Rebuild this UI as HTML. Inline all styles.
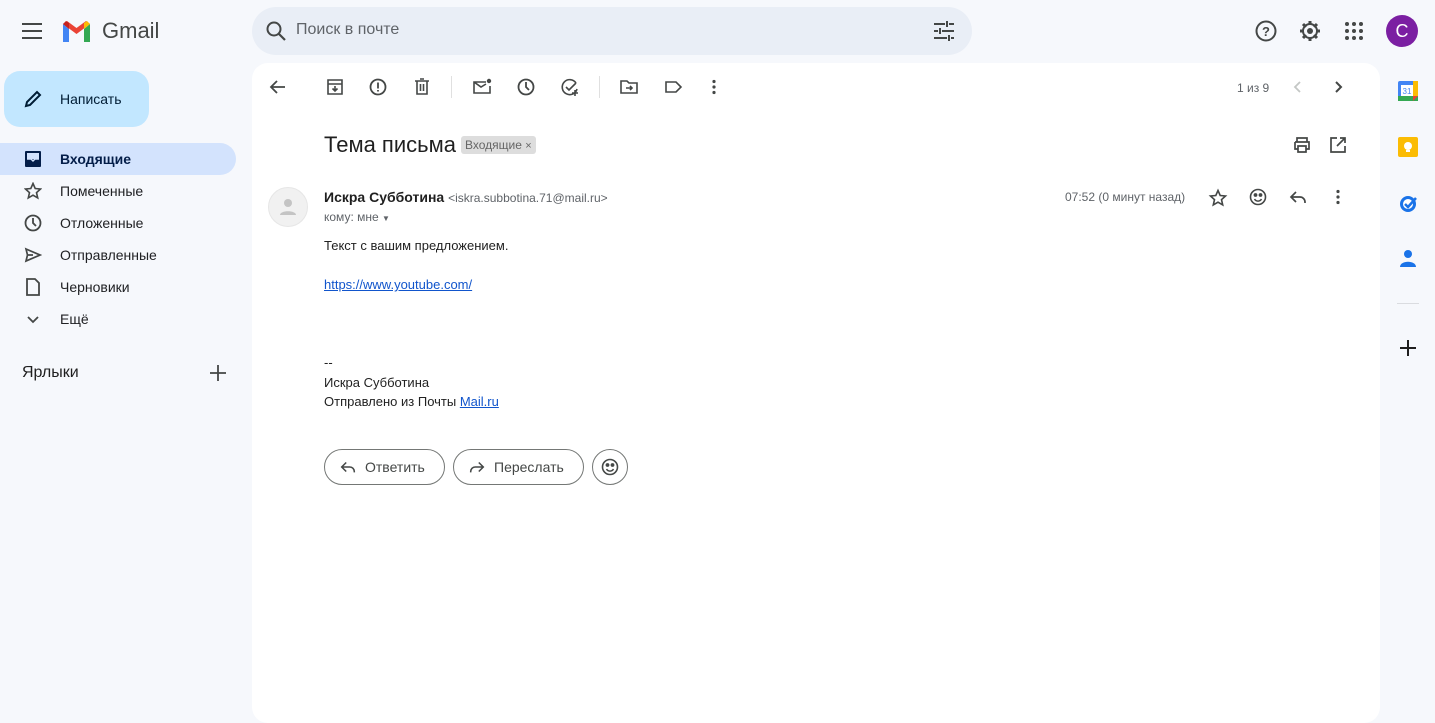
<!DOCTYPE html>
<html><head><meta charset="utf-8">
<style>
*{box-sizing:border-box;margin:0;padding:0}
body{width:1435px;height:706px;background:#f6f8fc;font-family:"Liberation Sans",Arial,sans-serif;color:#1f1f1f;position:relative;overflow:hidden}
.abs{position:absolute}
svg{display:block}
.ic{position:absolute;width:20px;height:20px;fill:none;stroke:#444746;stroke-width:1.8}
.nav{position:absolute;left:0;width:236px;height:32px;border-radius:0 16px 16px 0;font-size:14px;color:#202124}
.nav span{position:absolute;left:60px;top:8px}
.nav svg{position:absolute;left:24px;top:7px}
.btn{position:absolute;top:449px;height:36px;border:1px solid #747775;border-radius:18px;font-size:14px;color:#444746}
</style></head><body>
<svg class="abs" style="left:22px;top:22px" width="20" height="18"><path d="M0 2h20M0 9h20M0 16h20" stroke="#444746" stroke-width="2"/></svg>
<svg class="abs" style="left:61px;top:20px" width="31" height="22" viewBox="0 0 31 22">
<path d="M2 22V4l6 5v13z" fill="#4285f4"/><path d="M23 22V9l6-5v18z" fill="#34a853"/>
<path d="M2 4l13.5 10L29 4v0l-4-3-9.5 7L6 1z" fill="#ea4335"/><path d="M23 9l6-5-3-3-3 2z" fill="#fbbc04"/><path d="M2 4l6 5V3L5 1z" fill="#c5221f"/></svg>
<div class="abs" style="left:102px;top:18px;font-size:22px;color:#444746">Gmail</div>
<div class="abs" style="left:252px;top:7px;width:720px;height:48px;border-radius:24px;background:#e9eef6"></div>
<svg class="abs" style="left:265px;top:20px" width="22" height="22"><circle cx="9" cy="9" r="6.5" fill="none" stroke="#444746" stroke-width="2"/><path d="M14 14l6 6" stroke="#444746" stroke-width="2.2"/></svg>
<div class="abs" style="left:296px;top:21px;font-size:16px;color:#5f6368">Поиск в почте</div>
<svg class="abs" style="left:934px;top:21px" width="20" height="20"><path d="M0 3h11M15 3h5M0 10h4M8 10h12M0 17h13M17 17h3M13 0v6M6 7v6M15 14v6" stroke="#444746" stroke-width="2"/></svg>
<svg class="abs" style="left:1255px;top:20px" width="22" height="22"><circle cx="11" cy="11" r="9.5" fill="none" stroke="#444746" stroke-width="2"/><text x="11" y="16" font-size="13" text-anchor="middle" fill="#444746" font-family="Liberation Sans" font-weight="bold">?</text></svg>
<svg class="abs" style="left:1299px;top:20px" width="22" height="22" viewBox="0 0 22 22"><circle cx="11" cy="11" r="7" fill="none" stroke="#444746" stroke-width="2"/><circle cx="11" cy="11" r="3" fill="#444746"/><path d="M11 1v4M11 17v4M1 11h4M17 11h4M4 4l3 3M15 15l3 3M4 18l3-3M15 7l3-3" stroke="#444746" stroke-width="3"/></svg>
<svg class="abs" style="left:1345px;top:22px" width="18" height="18"><g fill="#444746"><circle cx="2" cy="2" r="2"/><circle cx="9" cy="2" r="2"/><circle cx="16" cy="2" r="2"/><circle cx="2" cy="9" r="2"/><circle cx="9" cy="9" r="2"/><circle cx="16" cy="9" r="2"/><circle cx="2" cy="16" r="2"/><circle cx="9" cy="16" r="2"/><circle cx="16" cy="16" r="2"/></g></svg>
<div class="abs" style="left:1386px;top:15px;width:32px;height:32px;border-radius:50%;background:#7b1fa2;color:#fff;font-size:18px;text-align:center;line-height:32px">C</div>

<div class="abs" style="left:4px;top:71px;width:145px;height:56px;border-radius:16px;background:#c2e7ff"></div>
<svg class="abs" style="left:23px;top:89px" width="20" height="20"><path d="M3 17l1-4L14 3l3 3L7 16z" fill="none" stroke="#001d35" stroke-width="2"/></svg>
<div class="abs" style="left:60px;top:91px;font-size:14px;color:#001d35">Написать</div>
<div class="nav" style="top:143px;background:#d3e3fd;font-weight:bold;color:#041e49"><svg width="18" height="18"><rect x="1" y="1" width="16" height="16" rx="1" fill="#041e49"/><path d="M3 9h4l2 2 2-2h4" stroke="#d3e3fd" stroke-width="1.5" fill="none"/><rect x="3" y="3" width="12" height="6" fill="#d3e3fd"/></svg><span>Входящие</span></div>
<div class="nav" style="top:175px"><svg width="18" height="18"><path d="M9 1.5l2.2 5 5.3.5-4 3.6 1.2 5.3L9 13.2 4.3 15.9l1.2-5.3-4-3.6 5.3-.5z" fill="none" stroke="#444746" stroke-width="1.6"/></svg><span>Помеченные</span></div>
<div class="nav" style="top:207px"><svg width="18" height="18"><circle cx="9" cy="9" r="7.5" fill="none" stroke="#444746" stroke-width="1.8"/><path d="M9 4v5l3 3" fill="none" stroke="#444746" stroke-width="1.8"/></svg><span>Отложенные</span></div>
<div class="nav" style="top:239px"><svg width="18" height="18"><path d="M2 3l14 6-14 6 1.5-6z M3.5 9H9" fill="none" stroke="#444746" stroke-width="1.7"/></svg><span>Отправленные</span></div>
<div class="nav" style="top:271px"><svg width="18" height="18"><path d="M3 1h8l4 4v12H3z" fill="none" stroke="#444746" stroke-width="1.8"/></svg><span>Черновики</span></div>
<div class="nav" style="top:303px"><svg width="18" height="18"><path d="M4 7l5 5 5-5" fill="none" stroke="#444746" stroke-width="1.8"/></svg><span>Ещё</span></div>
<div class="abs" style="left:22px;top:364px;font-size:16px;color:#1f1f1f">Ярлыки</div>
<svg class="abs" style="left:210px;top:365px" width="16" height="16"><path d="M8 0v16M0 8h16" stroke="#444746" stroke-width="1.8"/></svg>

<div class="abs" style="left:252px;top:63px;width:1128px;height:660px;background:#fff;border-radius:16px"></div>
<svg class="ic" style="left:268px;top:77px" viewBox="0 0 20 20"><path d="M17 10H4M9 4l-6 6 6 6"/></svg>
<svg class="ic" style="left:325px;top:77px" viewBox="0 0 20 20"><path d="M3 3h14v14H3zM3 7h14M10 9v5M7.5 11.5L10 14l2.5-2.5" stroke-width="1.6"/></svg>
<svg class="ic" style="left:368px;top:77px" viewBox="0 0 20 20"><circle cx="10" cy="10" r="7.5"/><path d="M10 5.5v6M10 13v1.5"/></svg>
<svg class="ic" style="left:412px;top:77px" viewBox="0 0 20 20"><path d="M3 4h14M8 2h4M5 4v13h10V4M8.5 7v7M11.5 7v7" stroke-width="1.6"/></svg>
<div class="abs" style="left:451px;top:76px;width:1px;height:22px;background:#e0e0e0"></div>
<svg class="ic" style="left:472px;top:77px" viewBox="0 0 20 20"><path d="M14 5H2v11h16V9M2 5l7 5 5-3" stroke-width="1.6"/><circle cx="17" cy="4" r="2.2" fill="#444746" stroke="none"/></svg>
<svg class="ic" style="left:516px;top:77px" viewBox="0 0 20 20"><circle cx="10" cy="10" r="7.5"/><path d="M10 5v5l3 3"/></svg>
<svg class="ic" style="left:560px;top:77px" viewBox="0 0 20 20"><path d="M16 6a7.5 7.5 0 1 0 1 6M6 10l3 3 7-7M15 13v6M12 16h6" stroke-width="1.6"/></svg>
<div class="abs" style="left:599px;top:76px;width:1px;height:22px;background:#e0e0e0"></div>
<svg class="ic" style="left:619px;top:77px" viewBox="0 0 20 20"><path d="M2 4h6l2 2h8v10H2zM7 11h6M11 9l2 2-2 2" stroke-width="1.6"/></svg>
<svg class="ic" style="left:663px;top:77px" viewBox="0 0 20 20"><path d="M3 5h10l5 5-5 5H3z" stroke-width="1.6"/></svg>
<svg class="ic" style="left:704px;top:77px" viewBox="0 0 20 20"><g fill="#444746" stroke="none"><circle cx="10" cy="4.5" r="1.6"/><circle cx="10" cy="10" r="1.6"/><circle cx="10" cy="15.5" r="1.6"/></g></svg>
<div class="abs" style="left:1237px;top:81px;font-size:12px;color:#5f6368">1 из 9</div>
<svg class="ic" style="left:1288px;top:77px;stroke:#c4c7c5" viewBox="0 0 20 20"><path d="M12 5l-5 5 5 5"/></svg>
<svg class="ic" style="left:1328px;top:77px" viewBox="0 0 20 20"><path d="M8 5l5 5-5 5" stroke-width="2"/></svg>

<div class="abs" style="left:324px;top:132px;font-size:22px;color:#1f1f1f">Тема письма</div>
<div class="abs" style="left:461px;top:136px;height:18px;padding:0 4px;background:#ddd;border-radius:3px;font-size:12px;line-height:18px;color:#666">Входящие <span style="font-size:11px">×</span></div>
<svg class="ic" style="left:1292px;top:135px" viewBox="0 0 20 20"><path d="M5 7V3h10v4M3 7h14v7h-3M6 14H3V7M6 11h8v6H6z" stroke-width="1.7"/></svg>
<svg class="ic" style="left:1328px;top:135px" viewBox="0 0 20 20"><path d="M9 3H3v14h14v-6M12 3h5v5M17 3l-8 8" stroke-width="1.7"/></svg>

<div class="abs" style="left:268px;top:187px;width:40px;height:40px;border-radius:50%;background:#f1f1f1;border:1px solid #e6e6e6"></div>
<svg class="abs" style="left:279px;top:197px" width="18" height="20"><circle cx="9" cy="6" r="4" fill="#c4c4c4"/><path d="M1 18c0-5 16-5 16 0z" fill="#c4c4c4"/></svg>
<div class="abs" style="left:324px;top:189px;font-size:14px"><b>Искра Субботина</b> <span style="font-size:12px;color:#5f6368">&lt;iskra.subbotina.71@mail.ru&gt;</span></div>
<div class="abs" style="left:324px;top:210px;font-size:12px;color:#5f6368">кому: мне <span style="font-size:8px">▼</span></div>
<div class="abs" style="left:1065px;top:190px;font-size:12px;color:#5f6368">07:52 (0 минут назад)</div>
<svg class="ic" style="left:1208px;top:188px" viewBox="0 0 20 20"><path d="M10 2.5l2.2 5 5.3.5-4 3.6 1.2 5.3L10 14.2 5.3 16.9l1.2-5.3-4-3.6 5.3-.5z" stroke-width="1.6"/></svg>
<svg class="ic" style="left:1248px;top:187px" viewBox="0 0 20 20"><circle cx="10" cy="10" r="7.5" stroke-width="1.6"/><circle cx="7.5" cy="8" r="1" fill="#444746"/><circle cx="12.5" cy="8" r="1" fill="#444746"/><path d="M6.5 12a4 4 0 0 0 7 0" stroke-width="1.5"/></svg>
<svg class="ic" style="left:1288px;top:187px" viewBox="0 0 20 20"><path d="M8 5l-5 5 5 5M3 10h9a5 5 0 0 1 5 5v1" stroke-width="1.7"/></svg>
<svg class="ic" style="left:1328px;top:187px" viewBox="0 0 20 20"><g fill="#444746" stroke="none"><circle cx="10" cy="4.5" r="1.6"/><circle cx="10" cy="10" r="1.6"/><circle cx="10" cy="15.5" r="1.6"/></g></svg>

<div class="abs" style="left:324px;top:236px;font-size:13px;line-height:19.5px;color:#222">
Текст с вашим предложением.<br><br>
<span style="color:#1155cc;text-decoration:underline">https://www.youtube.com/</span><br><br><br><br>
--<br>Искра Субботина<br>Отправлено из Почты <span style="color:#1155cc;text-decoration:underline">Mail.ru</span>
</div>

<div class="btn" style="left:324px;width:121px"><svg class="ic" style="left:14px;top:8px;width:18px;height:18px" viewBox="0 0 20 20"><path d="M8 5l-5 5 5 5M3 10h9a5 5 0 0 1 5 5v1" stroke-width="1.7"/></svg><span class="abs" style="left:40px;top:9px">Ответить</span></div>
<div class="btn" style="left:453px;width:131px"><svg class="ic" style="left:14px;top:8px;width:18px;height:18px" viewBox="0 0 20 20"><path d="M12 5l5 5-5 5M17 10H8a5 5 0 0 0-5 5v1" stroke-width="1.7"/></svg><span class="abs" style="left:40px;top:9px">Переслать</span></div>
<div class="btn" style="left:592px;width:36px"><svg class="ic" style="left:7px;top:7px" viewBox="0 0 20 20"><circle cx="10" cy="10" r="7.5" stroke-width="1.6"/><circle cx="7.5" cy="8" r="1" fill="#444746"/><circle cx="12.5" cy="8" r="1" fill="#444746"/><path d="M6.5 12a4 4 0 0 0 7 0" stroke-width="1.5"/></svg></div>

<svg class="abs" style="left:1398px;top:81px" width="20" height="20"><rect x="0" y="0" width="20" height="20" rx="2" fill="#4285f4"/><rect x="0" y="15" width="20" height="5" fill="#34a853"/><rect x="15" y="0" width="5" height="15" fill="#fbbc04"/><rect x="3" y="4" width="12" height="11" fill="#fff"/><text x="9" y="13" font-size="8" text-anchor="middle" fill="#4285f4" font-family="Liberation Sans">31</text><path d="M15 15h5l-5 5z" fill="#ea4335"/></svg>
<svg class="abs" style="left:1398px;top:137px" width="20" height="20"><rect width="20" height="20" rx="2" fill="#fbbc04"/><circle cx="10" cy="9" r="4" fill="#fff"/><rect x="8" y="13" width="4" height="2" fill="#fff"/></svg>
<svg class="abs" style="left:1398px;top:193px" width="20" height="20"><circle cx="10" cy="11" r="8" fill="#1a73e8"/><circle cx="10" cy="11" r="5" fill="#fff"/><path d="M7 11l3 3 8-9" stroke="#1a73e8" stroke-width="2.5" fill="none"/></svg>
<svg class="abs" style="left:1399px;top:249px" width="18" height="20"><circle cx="9" cy="5" r="4" fill="#1a73e8"/><path d="M1 18c0-7 16-7 16 0z" fill="#1a73e8"/></svg>
<div class="abs" style="left:1397px;top:303px;width:22px;height:1px;background:#dadce0"></div>
<svg class="abs" style="left:1400px;top:340px" width="16" height="16"><path d="M8 0v16M0 8h16" stroke="#1f1f1f" stroke-width="2"/></svg>
</body></html>
